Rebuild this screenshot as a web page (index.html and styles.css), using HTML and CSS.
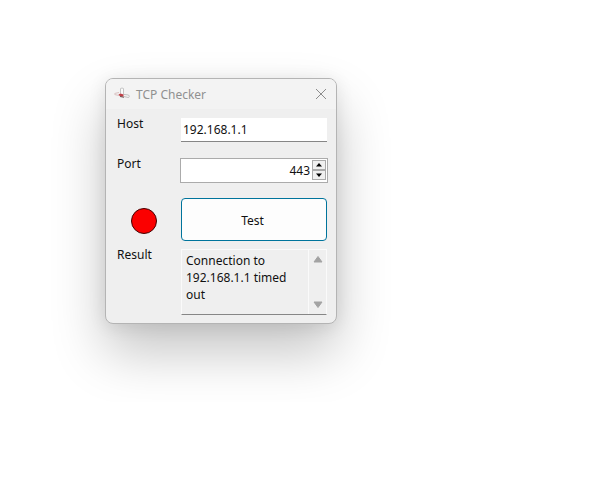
FILE: index.html
```html
<!DOCTYPE html>
<html lang="en">
<head>
    <meta charset="utf-8">
    <title>TCP Checker</title>
    <link rel="stylesheet" href="styles.css">
</head>
<body>

    <main class="window">
        <header class="titlebar">
            <svg class="appIcon" width="16" height="16" viewBox="0 0 16 16" aria-hidden="true">
                <path d="M6.500 7.500V2.500q1.500-1 3 0v6" fill="#fafafa" stroke="#c4c4c4"/>
                <path d="M.500 7.500L5 6.500M.500 8.500l4.500 1" stroke="#d8c0c0" fill="none"/>
                <path d="M9.500 8.500l5 .5q1.500 1 .2 2.500l-5-1" fill="#fafafa" stroke="#bdbdbd"/>
                <path d="M4.500 8.500L6.500 7.500l3 1v2l-3 .5z" fill="#c04048"/>
                <path d="M6 10.500l4 .8" stroke="#6c5c5c"/>
            </svg>
            <h1 class="title">TCP Checker</h1>
            <button class="closeButton" type="button" aria-label="Close">
                <svg width="12" height="12" viewBox="0 0 12 12"><path d="M1 1l10 10M11 1L1 11" stroke="#8c8c8c" fill="none"/></svg>
            </button>
        </header>

        <form class="content">
            <label for="host">Host</label>
            <input class="field hostField" type="text" id="host" value="192.168.1.1">

            <label for="port">Port</label>
            <div class="field spinBox">
                <input class="portInput" type="text" inputmode="numeric" id="port" value="443">
                <div class="spinButtons">
                    <button class="spinButton" type="button" aria-label="Increase port">
                        <svg width="6" height="4" viewBox="0 0 6 4"><path d="M0 3.500l3-3.500 3 3.500z"/></svg>
                    </button>
                    <button class="spinButton" type="button" aria-label="Decrease port">
                        <svg width="6" height="4" viewBox="0 0 6 4"><path d="M0 .500l3 3.500 3-3.500z"/></svg>
                    </button>
                </div>
            </div>

            <!-- red = closed, green = open -->
            <div class="led"></div>
            <button class="field testButton" type="button">Test</button>

            <label for="result">Result</label>
            <div class="field resultBox">
                <textarea class="resultText" id="result" readonly>Connection to 192.168.1.1 timed out</textarea>
                <div class="scrollbar">
                    <button class="scrollButton" type="button" aria-label="Scroll up">
                        <svg width="10" height="8" viewBox="0 0 10 8"><path d="M5 1.500L9 7H1z" stroke-linejoin="round"/></svg>
                    </button>
                    <button class="scrollButton" type="button" aria-label="Scroll down">
                        <svg width="10" height="8" viewBox="0 0 10 8"><path d="M5 6.500L1 1h8z" stroke-linejoin="round"/></svg>
                    </button>
                </div>
            </div>
        </form>
    </main>

</body>
</html>
```
FILE: styles.css
```css
* { box-sizing: border-box; }
body {
    margin: 0;
    padding: 78px 105px;
    background-color: #fff;
    color: #111;
    font-family: "Noto Sans", "Open Sans", sans-serif;
    font-size: 12px;
    line-height: 17px;
}
input, textarea, button {
    margin: 0;
    padding: 0;
    border: none;
    background: none;
    color: inherit;
    font: inherit;
}
button, label { cursor: default; }
svg { display: block; }

.window {
    width: 60%;
    max-width: 232px;
    border: 1px solid #b4b4b4;
    border-radius: 8px;
    background: #efefef;
    overflow: hidden;
    box-shadow: 0 28px 54px rgba(0, 0, 0, 0.23), 0 2px 18px rgba(0, 0, 0, 0.09);
}
.titlebar {
    display: flex;
    align-items: center;
    height: 30px;
    padding: 0 9px 0 8px;
    background: #f3f3f3;
}
.title {
    flex: 1;
    margin: 0 0 0 6px;
    color: #909090;
    font-size: 12px;
    font-weight: normal;
}

/* Label column on the left, controls on the right */
.content {
    display: grid;
    grid-template-columns: 63px 1fr;
    grid-template-rows: 40px 40px 51px auto;
    padding: 6px 8px 8px 11px;
}
.field {
    margin-top: 3px;
    min-width: 0;
}
.hostField {
    height: 24px;
    margin-left: 1px;
    margin-right: 1px;
    padding: 0 2px;
    background: #fff;
    border-bottom: 1px solid #868686;
}
.spinBox {
    display: flex;
    height: 25px;
    padding: 1px;
    background: #fff;
    border: 1px solid #ababab;
}
.portInput {
    flex: 1;
    min-width: 0;
    height: 20px;
    padding-right: 2px;
    text-align: right;
}
.spinButtons {
    display: flex;
    flex-direction: column;
    width: 14px;
    height: 20px;
}
.spinButton {
    display: flex;
    flex: 1;
    align-items: center;
    justify-content: center;
    background: #f0f0f0;
    border: 1px solid #ababab;
}
.led {
    align-self: center;
    width: 26px;
    height: 26px;
    margin-left: 14px;
    background: #fb0000;
    border: 1px solid #400;
    border-radius: 50%;
}
.testButton {
    height: 43px;
    margin-left: 1px;
    margin-right: 1px;
    padding: 1px 3px 0 0;
    background: #fdfdfd;
    border: 1px solid #00749c;
    border-radius: 4px;
}
.resultBox {
    display: flex;
    height: 66px;
    margin-left: 1px;
    margin-right: 1px;
    border: 1px solid #fafafa;
    border-bottom-color: #868686;
}
.resultText {
    flex: 1;
    min-width: 0;
    padding: 2px 4px;
    outline: none;
    overflow: hidden;
    resize: none;
}
.scrollbar {
    display: flex;
    flex-direction: column;
    justify-content: space-between;
    width: 18px;
    padding: 5px 4px;
    border-left: 1px solid #fafafa;
}
.scrollButton {
    fill: #a3a3a3;
    stroke: #a3a3a3;
}
```
